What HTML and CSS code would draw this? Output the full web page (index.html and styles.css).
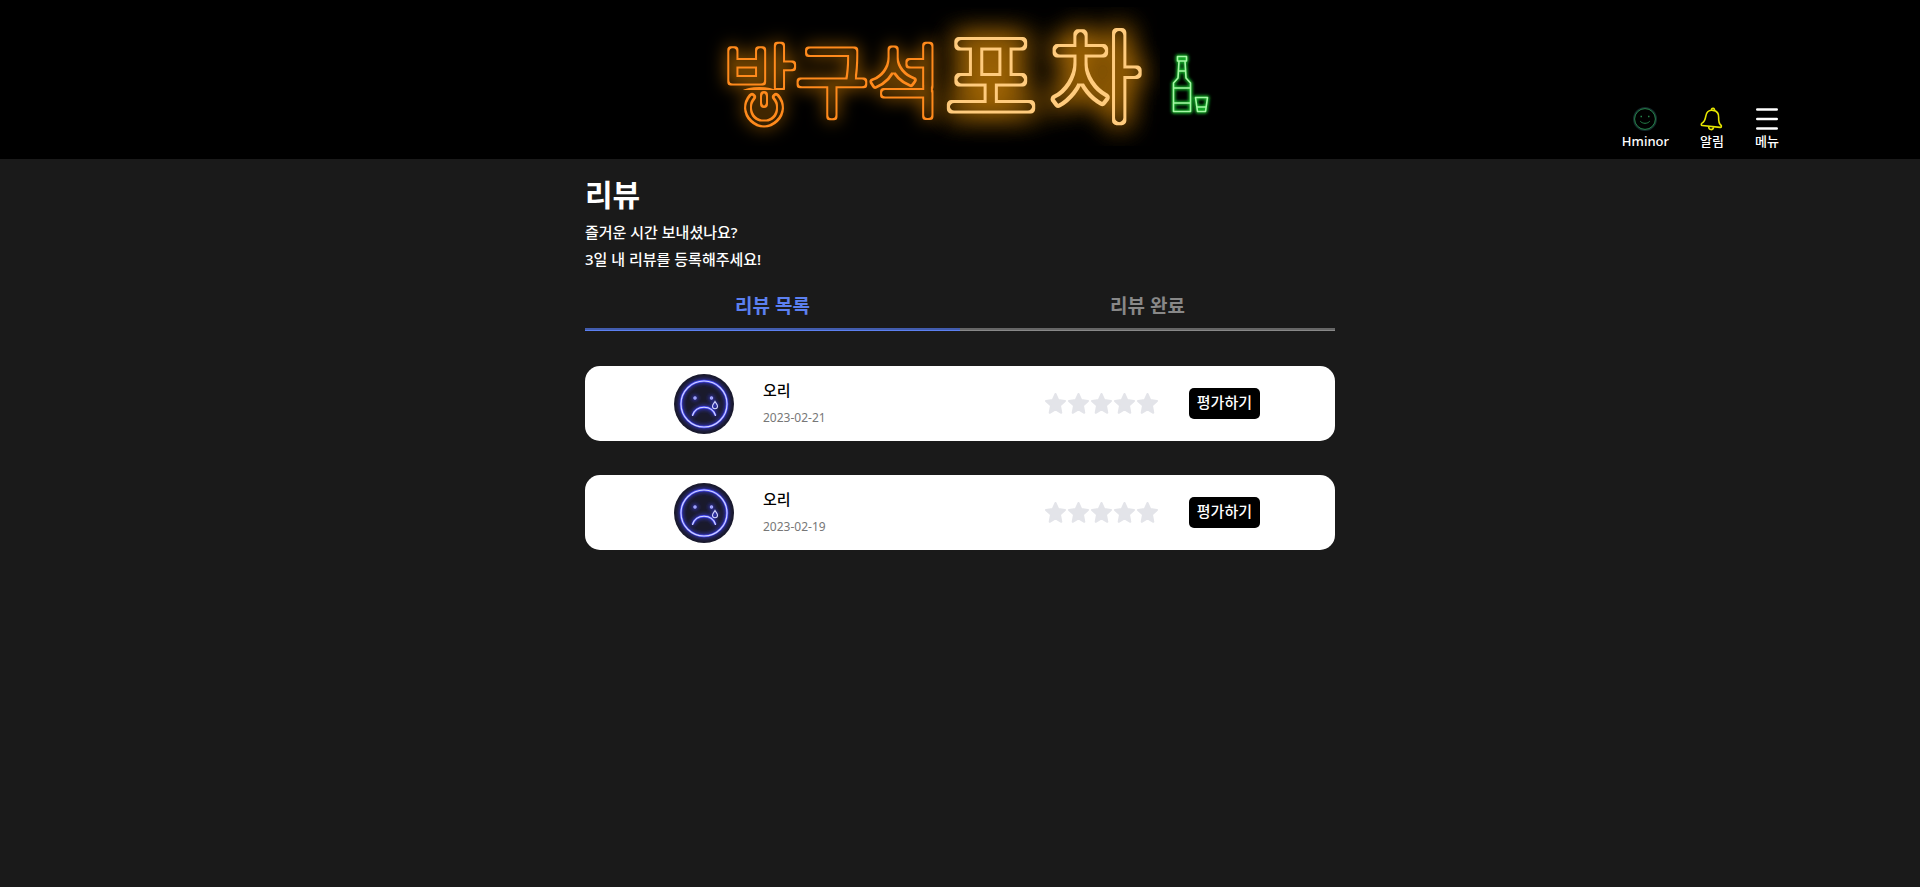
FILE: index.html
```html
<!DOCTYPE html>
<html lang="ko">
<head>
<meta charset="utf-8">
<title>방구석 포차 - 리뷰</title>
<link rel="stylesheet" href="styles.css">
</head>
<body>
<svg class="defs" width="0" height="0" aria-hidden="true">
  <symbol id="star" viewBox="0 0 23 23"><path d="M11.500 2.000 L14.200 8.000 L21 8.900 L16 13.600 L17.300 20.800 L11.500 17.500 L5.700 20.800 L7 13.600 L2 8.900 L8.800 8.000 Z" fill="#e3e4e9" stroke="#e3e4e9" stroke-width="2" stroke-linejoin="round"/></symbol>
  <symbol id="sad" viewBox="0 0 60 60">
    <defs>
      <filter id="sadGlow" x="-20%" y="-20%" width="140%" height="140%"><feGaussianBlur stdDeviation="2"/></filter>
    </defs>
    <circle cx="30" cy="30" r="30" fill="#1a1a2c"/>
    <g fill="none" stroke="#3a3ef0" stroke-width="3" filter="url(#sadGlow)">
      <circle cx="30" cy="30" r="23"/><path d="M18.500 41.500C22 30.500 38 30.500 41.500 41.500"/><circle cx="21" cy="24" r="1"/><circle cx="37.500" cy="24" r="1"/><circle cx="41" cy="31" r="1.500"/>
    </g>
    <g fill="none" stroke="#4c50ff" stroke-width="2.400"><circle cx="30" cy="30" r="23"/><path d="M18.500 41.500C22 30.500 38 30.500 41.500 41.500"/></g>
    <g fill="none" stroke="#d3d5ff" stroke-width="1.100" stroke-linecap="round">
      <circle cx="30" cy="30" r="23"/><path d="M18.500 41.500C22 30.500 38 30.500 41.500 41.500"/>
      <path d="M41 27.500C40 29.500 38.500 30.500 38.500 32.200A2.500 2.500 0 0 0 43.500 32.200C43.500 30.500 42 29.500 41 27.500Z"/>
      <circle cx="21" cy="24" r="1.200" fill="#8a8dff" stroke="#a9acff"/><circle cx="37.500" cy="24" r="1.200" fill="#8a8dff" stroke="#a9acff"/>
    </g>
  </symbol>
</svg>

<header class="header">
  <a class="logo" href="#" aria-label="방구석 포차">
    <svg class="logo-art" width="520" height="159" viewBox="700 0 520 159">
      <defs>
        <filter id="neonThin" filterUnits="userSpaceOnUse" x="700" y="7" width="460" height="139" color-interpolation-filters="sRGB">
          <feMorphology in="SourceAlpha" operator="erode" radius="2" result="inner"/>
          <feComposite in="SourceGraphic" in2="inner" operator="out" result="tube"/>
          <feGaussianBlur in="SourceAlpha" stdDeviation="9" result="b1"/>
          <feFlood flood-color="#945800"/>
          <feComposite in2="b1" operator="in" result="halo"/>
          <feMerge><feMergeNode in="halo"/><feMergeNode in="tube"/></feMerge>
        </filter>
        <filter id="neonBold" filterUnits="userSpaceOnUse" x="700" y="7" width="460" height="139" color-interpolation-filters="sRGB">
          <feMorphology in="SourceAlpha" operator="erode" radius="3" result="inner"/>
          <feComposite in="SourceGraphic" in2="inner" operator="out" result="tube"/>
          <feGaussianBlur in="SourceAlpha" stdDeviation="14" result="b1"/>
          <feFlood flood-color="#ac6c04"/>
          <feComposite in2="b1" operator="in" result="halo"/>
          <feMerge><feMergeNode in="halo"/><feMergeNode in="halo"/><feMergeNode in="tube"/></feMerge>
        </filter>
        <filter id="greenGlow" x="-40%" y="-40%" width="180%" height="180%"><feGaussianBlur stdDeviation="1.600"/></filter>
        <mask id="powerGap" maskUnits="userSpaceOnUse" x="700" y="0" width="520" height="158">
          <rect x="700" y="0" width="520" height="158" fill="#fff"/>
          <rect x="720" y="90" width="74" height="42" fill="#000"/>
        </mask>
      </defs>
      <g filter="url(#neonBold)">
        <text class="sign sign-bold" x="991" y="113">포</text>
        <text class="sign sign-bold" x="1095" y="113">차</text>
      </g>
      <g filter="url(#neonThin)">
        <g mask="url(#powerGap)"><text class="sign sign-thin" x="723" y="111">방구석</text></g>
        <path d="M764 95V104M752 97A16 16 0 1 0 776 97" fill="none" stroke="#ff8a1c" stroke-width="8" stroke-linecap="round"/>
      </g>
      <g fill="none" stroke-linejoin="round">
        <path stroke="#16b52c" stroke-width="4" filter="url(#greenGlow)" d="M1177.500 56.500H1186.500V61H1177.500ZM1179 61L1178 78L1173.500 83V111.500H1190.500V83L1186 78L1185 61M1178 71H1186M1173.500 88H1190.500M1173.500 103H1190.500M1195.500 97.500H1207.500L1205.500 111.500H1197.500ZM1197 107H1206"/>
        <path stroke="#a5f7a5" stroke-width="1.600" d="M1177.500 56.500H1186.500V61H1177.500ZM1179 61L1178 78L1173.500 83V111.500H1190.500V83L1186 78L1185 61M1178 71H1186M1173.500 88H1190.500M1173.500 103H1190.500M1195.500 97.500H1207.500L1205.500 111.500H1197.500ZM1197 107H1206"/>
      </g>
    </svg>
  </a>
  <nav class="nav">
    <a class="nav-item" href="#">
      <svg width="24" height="24" viewBox="0 0 24 24" fill="none"><circle cx="12" cy="12" r="11.200" stroke="#142b2c" stroke-width="1.600"/><g stroke="#26834a"><circle cx="12" cy="12" r="10.400"/><path d="M7.500 14.500C9.500 17 14.500 17 16.500 14.500" stroke-linecap="round"/><path d="M7.500 9.500H9M15 9.500H16.500" stroke-width="1.500"/></g></svg>
      <span>Hminor</span>
    </a>
    <a class="nav-item" href="#">
      <svg width="24" height="24" viewBox="0 0 24 24" fill="none" stroke="#e6e600" stroke-width="1.600" stroke-linejoin="round"><g transform="rotate(6 12 12)"><path d="M12 3.300C8 3.300 5.700 6 5.500 10C5.300 14 4.800 15.500 2.500 17.200C1.500 18 1.800 19.500 3 19.500H21C22.200 19.500 22.500 18 21.500 17.200C19.200 15.500 18.700 14 18.500 10C18.300 6 16 3.300 12 3.300Z"/><path d="M10.500 3.300C10 .5 14 .5 13.500 3.300M9.500 20C10 23.500 14 23.500 14.500 20"/></g></svg>
      <span>알림</span>
    </a>
    <button class="nav-item" type="button">
      <svg width="24" height="24" viewBox="0 0 24 24" stroke="#fff" stroke-width="2.600" stroke-linecap="round"><path d="M2.300 2.500H21.700M2.300 12H21.700M2.300 21.500H21.700"/></svg>
      <span>메뉴</span>
    </button>
  </nav>
</header>

<main class="content">
  <h1 class="title">리뷰</h1>
  <p class="lead">즐거운 시간 보내셨나요?<br>3일 내 리뷰를 등록해주세요!</p>

  <div class="tabs" role="tablist">
    <button class="tab tab-active" type="button" role="tab" aria-selected="true">리뷰 목록</button>
    <button class="tab" type="button" role="tab" aria-selected="false">리뷰 완료</button>
  </div>

  <ul class="reviews">
    <li class="card">
      <svg class="avatar" role="img" aria-label="프로필"><use href="#sad"/></svg>
      <div class="info"><strong class="name">오리</strong><time class="date" datetime="2023-02-21">2023-02-21</time></div>
      <div class="stars" role="img" aria-label="별점 0점"><svg><use href="#star"/></svg><svg><use href="#star"/></svg><svg><use href="#star"/></svg><svg><use href="#star"/></svg><svg><use href="#star"/></svg></div>
      <button class="rate" type="button">평가하기</button>
    </li>
    <li class="card">
      <svg class="avatar" role="img" aria-label="프로필"><use href="#sad"/></svg>
      <div class="info"><strong class="name">오리</strong><time class="date" datetime="2023-02-19">2023-02-19</time></div>
      <div class="stars" role="img" aria-label="별점 0점"><svg><use href="#star"/></svg><svg><use href="#star"/></svg><svg><use href="#star"/></svg><svg><use href="#star"/></svg><svg><use href="#star"/></svg></div>
      <button class="rate" type="button">평가하기</button>
    </li>
  </ul>
</main>
</body>
</html>
```
FILE: styles.css
```css
* { box-sizing: border-box; }

body {
  margin: 0;
  min-height: 100vh;
  background: #1a1a1a;
  color: #fff;
  font-family: "Noto Sans", "Noto Sans CJK KR", sans-serif;
  font-size: 15px;
  font-weight: 500;
}

button {
  font: inherit;
  color: inherit;
  background: none;
  border: 0;
  padding: 0;
  cursor: pointer;
}

.defs { position: absolute; }

.header {
  display: grid;
  grid-template-columns: 1fr auto 1fr;
  background: #000;
}

.logo { grid-column: 2; }
.logo-art { display: block; }

.sign {
  font-family: "Noto Sans CJK KR", sans-serif;
  font-weight: 300;
  stroke-linejoin: round;
}

.sign-thin {
  font-size: 79px;
  fill: #ff8a1c;
  stroke: #ff8a1c;
  stroke-width: 7px;
}

.sign-bold {
  font-size: 98px;
  fill: #ffcb7d;
  stroke: #ffcb7d;
  stroke-width: 9px;
  text-anchor: middle;
}

.nav {
  display: flex;
  align-items: flex-end;
  justify-content: flex-end;
  gap: 31px;
  padding: 0 141px 8px 0;
}

.nav-item {
  display: flex;
  flex-direction: column;
  align-items: center;
  color: #fff;
  font-size: 13px;
  font-weight: 500;
  line-height: 20px;
  text-decoration: none;
}

.content {
  width: 100%;
  max-width: 750px;
  margin: 0 auto;
}

.title {
  margin: 0;
  padding-top: 16px;
  font-size: 30px;
  font-weight: 700;
  line-height: 40px;
}

.lead {
  margin: 4px 0 0;
  line-height: 27px;
}

.tabs {
  display: flex;
  margin-top: 13px;
}

.tab {
  flex: 1;
  padding: 6px 0 10px;
  border-bottom: 1px solid #888;
  box-shadow: inset 0 -2px #666;
  color: #888;
  font-size: 19px;
  font-weight: 700;
  line-height: 28px;
}

.tab-active {
  border-color: #5c80f0;
  box-shadow: inset 0 -2px #425cae;
  color: #5c80f0;
}

.reviews {
  display: grid;
  gap: 34px;
  margin: 35px 0 0;
  padding: 0;
  list-style: none;
}

.card {
  display: flex;
  align-items: center;
  height: 75px;
  padding: 0 75px 0 89px;
  border-radius: 15px;
  background: #fff;
  color: #000;
}

.avatar {
  width: 60px;
  height: 60px;
}

.info {
  display: grid;
  gap: 5px;
  margin-left: 29px;
}

.name {
  font-weight: 500;
  line-height: 24px;
}

.date {
  color: #777;
  font-size: 12px;
  font-weight: 400;
  line-height: 22px;
}

.stars {
  display: flex;
  margin: 0 30px 0 auto;
}

.stars svg {
  width: 23px;
  height: 23px;
}

.rate {
  padding: 2px 8px 5px;
  border-radius: 5px;
  background: #000;
  color: #fff;
  line-height: 24px;
}
```
